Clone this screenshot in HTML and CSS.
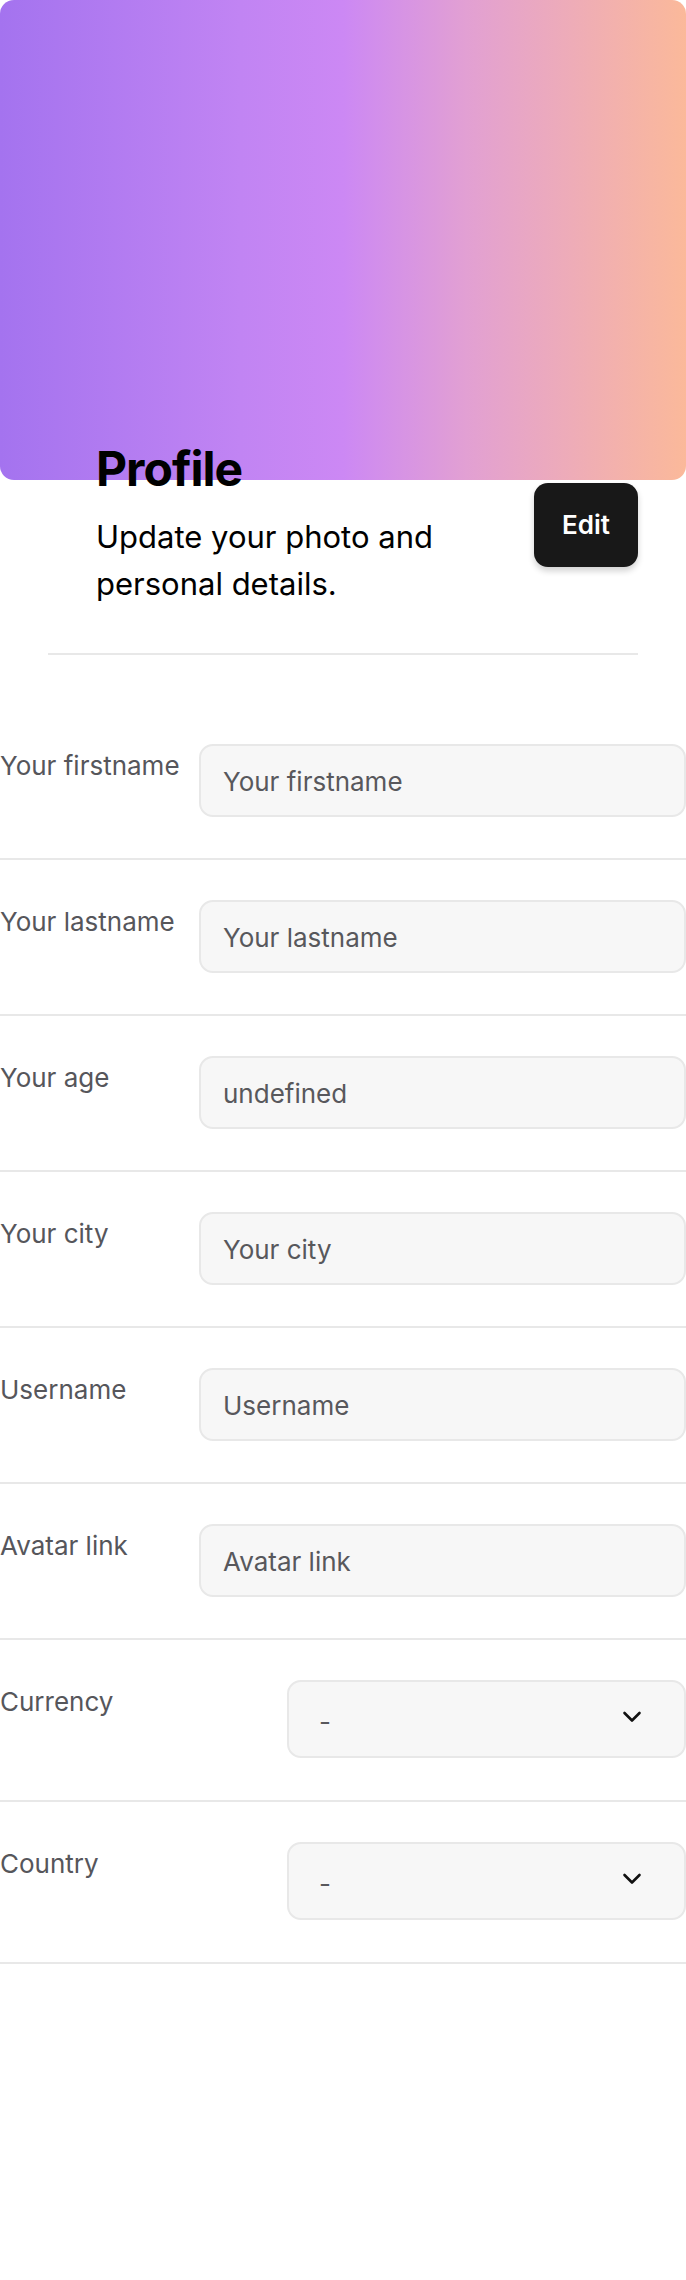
FILE: index.html
```html
<!DOCTYPE html>
<html lang="en">
<head>
<meta charset="utf-8">
<title>Profile</title>
<link rel="stylesheet" href="styles.css">
</head>
<body>
<div class="banner"></div>
<section class="header">
  <div class="header-inner">
    <div class="header-text">
      <h1 class="title">Profile</h1>
      <p class="subtitle">Update your photo and personal details.</p>
    </div>
    <button class="edit-btn" type="button">Edit</button>
  </div>
  <div class="divider"></div>
</section>
<form class="form">
  <div class="row">
    <label class="label">Your firstname</label>
    <input class="field" type="text" placeholder="Your firstname">
  </div>
  <div class="row">
    <label class="label">Your lastname</label>
    <input class="field" type="text" placeholder="Your lastname">
  </div>
  <div class="row">
    <label class="label">Your age</label>
    <input class="field" type="text" value="undefined">
  </div>
  <div class="row">
    <label class="label">Your city</label>
    <input class="field" type="text" placeholder="Your city">
  </div>
  <div class="row">
    <label class="label">Username</label>
    <input class="field" type="text" placeholder="Username">
  </div>
  <div class="row">
    <label class="label">Avatar link</label>
    <input class="field" type="text" placeholder="Avatar link">
  </div>
  <div class="row row-select">
    <label class="label">Currency</label>
    <div class="select">
      <span class="select-value">-</span>
      <svg class="chevron" width="20" height="12" viewBox="0 0 20 12"><polyline points="2.5,2 10,9.5 17.5,2" fill="none" stroke="#111" stroke-width="2.6" stroke-linecap="round" stroke-linejoin="round"/></svg>
    </div>
  </div>
  <div class="row row-select">
    <label class="label">Country</label>
    <div class="select">
      <span class="select-value">-</span>
      <svg class="chevron" width="20" height="12" viewBox="0 0 20 12"><polyline points="2.5,2 10,9.5 17.5,2" fill="none" stroke="#111" stroke-width="2.6" stroke-linecap="round" stroke-linejoin="round"/></svg>
    </div>
  </div>
</form>
</body>
</html>
```
FILE: styles.css
```css
* { box-sizing: border-box; }
html, body { margin: 0; padding: 0; background: #fff; }
body {
  font-family: Inter, "Noto Sans", "Liberation Sans", sans-serif;
  color: #000;
  width: 686px;
  min-height: 2280px;
}
.banner {
  height: 480px;
  border-radius: 14px;
  background: linear-gradient(to right, #a473ef 0%, #c184f3 35%, #cc88f4 50%, #e2a0d3 68%, #fbb99a 100%);
}
.header {
  padding: 0 48px;
}
.header-inner {
  display: flex;
  align-items: center;
  gap: 24px;
  padding-left: 48px;
  margin-top: -35px;
}
.header-text { flex: 1; min-width: 0; }
.title {
  margin: 0 0 20px 0;
  font-size: 48px;
  line-height: 48px;
  font-weight: 700;
  letter-spacing: -1px;
}
.subtitle {
  margin: 0;
  font-size: 31px;
  line-height: 47px;
  font-weight: 400;
}
.edit-btn {
  flex-shrink: 0;
  font-family: inherit;
  font-size: 26px;
  line-height: 40px;
  font-weight: 600;
  color: #fff;
  background: #181818;
  border: none;
  border-radius: 14px;
  padding: 22px 28px;
  box-shadow: 0 4px 6px rgba(0, 0, 0, 0.18);
  margin-top: -3px;
}
.divider {
  height: 2px;
  background: #e8e8e8;
  margin-top: 46px;
}
.form {
  margin: 49px 0 0 0;
}
.row {
  display: flex;
  align-items: flex-start;
  padding: 40px 0 41px 0;
  border-bottom: 2px solid #e8e8e8;
}
.label {
  width: 199px;
  flex-shrink: 0;
  font-size: 26px;
  line-height: 39px;
  color: #56565b;
  padding-top: 2px;
  white-space: nowrap;
}
.field {
  flex: 1;
  min-width: 0;
  height: 73px;
  margin: 0;
  padding: 2px 22px 0 22px;
  font-family: inherit;
  font-size: 26px;
  color: #58585c;
  background: #f7f7f7;
  border: 2px solid #e8e8e8;
  border-radius: 14px;
  outline: none;
}
.field::placeholder { color: #58585c; opacity: 1; }
.row-select { padding-bottom: 42px; }
.select {
  margin-left: auto;
  width: 399px;
  height: 78px;
  display: flex;
  align-items: center;
  justify-content: space-between;
  padding: 4px 42px 0 30px;
  background: #f7f7f7;
  border: 2px solid #e8e8e8;
  border-radius: 14px;
}
.select-value {
  font-size: 26px;
  line-height: 39px;
  color: #58585c;
}
.chevron { display: block; margin-top: -8px; }
```
